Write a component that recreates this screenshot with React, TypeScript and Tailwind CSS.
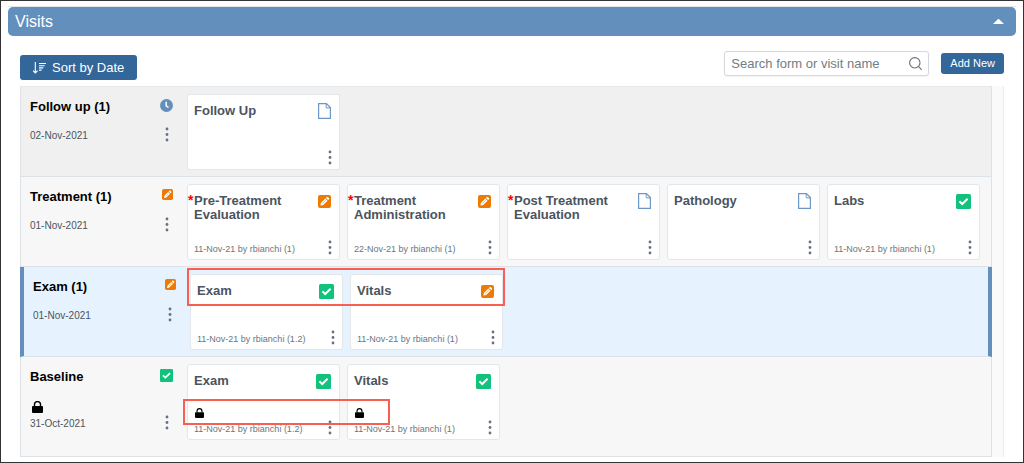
import { useState } from "react";
import clsx from "clsx";

type Status = "scheduled" | "inProgress" | "complete" | "empty";

interface Form {
  name: string;
  status: Status;
  info?: string;
  required?: boolean;
  locked?: boolean;
}

interface Visit {
  name: string;
  date: string;
  status: Status;
  forms: Form[];
  locked?: boolean;
  selected?: boolean;
}

const visits: Visit[] = [
  {
    name: "Follow up (1)",
    date: "02-Nov-2021",
    status: "scheduled",
    forms: [{ name: "Follow Up", status: "empty" }],
  },
  {
    name: "Treatment (1)",
    date: "01-Nov-2021",
    status: "inProgress",
    forms: [
      { name: "Pre-Treatment Evaluation", status: "inProgress", info: "11-Nov-21 by rbianchi (1)", required: true },
      { name: "Treatment Administration", status: "inProgress", info: "22-Nov-21 by rbianchi (1)", required: true },
      { name: "Post Treatment Evaluation", status: "empty", required: true },
      { name: "Pathology", status: "empty" },
      { name: "Labs", status: "complete", info: "11-Nov-21 by rbianchi (1)" },
    ],
  },
  {
    name: "Exam (1)",
    date: "01-Nov-2021",
    status: "inProgress",
    selected: true,
    forms: [
      { name: "Exam", status: "complete", info: "11-Nov-21 by rbianchi (1.2)" },
      { name: "Vitals", status: "inProgress", info: "11-Nov-21 by rbianchi (1)" },
    ],
  },
  {
    name: "Baseline",
    date: "31-Oct-2021",
    status: "complete",
    locked: true,
    forms: [
      { name: "Exam", status: "complete", info: "11-Nov-21 by rbianchi (1.2)", locked: true },
      { name: "Vitals", status: "complete", info: "11-Nov-21 by rbianchi (1)", locked: true },
    ],
  },
];

function StatusIcon({ status, small }: { status: Status; small?: boolean }) {
  if (status === "scheduled") {
    return (
      <svg className="size-[13px]" viewBox="0 0 13 13" fill="none">
        <circle cx="6.5" cy="6.5" r="6.5" fill="#638fbc" />
        <path d="M6.2 2.8v4l2.3 1.7" stroke="#fff" strokeWidth="1.5" />
      </svg>
    );
  }
  if (status === "inProgress") {
    return (
      <svg className={small ? "size-[11px]" : "size-[13px]"} viewBox="0 0 13 13">
        <rect width="13" height="13" rx="2" fill="#ee7a06" />
        <path d="M2.4 10.6l.5-2.7 4.4-4.4 2.2 2.2-4.4 4.4zM7.9 2.9l.7-.7c.4-.4.9-.4 1.3 0l.9.9c.4.4.4.9 0 1.3l-.7.7z" fill="#fff" />
        <path d="M4.3 8.7l3.4-3.4" stroke="#ee7a06" strokeWidth="0.5" />
      </svg>
    );
  }
  if (status === "complete") {
    return (
      <svg className={small ? "size-[13px]" : "size-[15px]"} viewBox="0 0 15 15" fill="none">
        <rect width="15" height="15" rx="1.5" fill="#10c27c" />
        <path d="M3.4 7.3l2.8 2.7 5.4-5.2" stroke="#fff" strokeWidth="2" />
      </svg>
    );
  }
  return (
    <svg className="h-4 w-[13px]" viewBox="0 0 13 16" fill="none" stroke="#6b98c6">
      <path d="M.6.6h7.8l4 4v10.8H.6z" strokeWidth="1.2" />
      <path d="M8.2.8v4.1h4.1" strokeWidth="1" />
    </svg>
  );
}

function LockIcon({ className }: { className: string }) {
  return (
    <svg className={className} viewBox="0 0 11 12" fill="none">
      <rect y="5" width="11" height="7" rx="1" fill="#000" />
      <path d="M2.5 5.5V3.6a3 3 0 0 1 6 0v1.9" stroke="#000" strokeWidth="1.4" />
    </svg>
  );
}

function MenuButton({ label }: { label: string }) {
  return (
    <button type="button" aria-label={label} className="shrink-0">
      <svg className="h-[15px] w-3" viewBox="0 0 12 15" fill="#66727f">
        <circle cx="6" cy="2" r="1.4" />
        <circle cx="6" cy="7.5" r="1.4" />
        <circle cx="6" cy="13" r="1.4" />
      </svg>
    </button>
  );
}

function FormCard({ form }: { form: Form }) {
  return (
    <article className="flex h-[76px] w-[153px] shrink-0 flex-col justify-between rounded-[3px] border border-[#e3e7eb] bg-white pt-2 pb-1">
      <div className="flex items-start pr-2">
        <span className="w-1.5 shrink-0 text-sm leading-[14px] font-bold text-[#ff0000]">{form.required && "*"}</span>
        <h3 className="flex-1 pt-px text-[13px] leading-[14px] font-bold text-[#4b545e]">{form.name}</h3>
        <div className="flex h-4 items-center">
          <StatusIcon status={form.status} />
        </div>
      </div>
      <div className="flex items-end justify-between pr-[3px] pl-1.5">
        <div className="text-[9px] leading-3 whitespace-nowrap text-[#6c757d]">
          {form.locked && <LockIcon className="mb-[5px] ml-px h-2.5 w-[9px]" />}
          <p>{form.info}</p>
        </div>
        <MenuButton label={`${form.name} menu`} />
      </div>
    </article>
  );
}

function VisitRow({ visit, first }: { visit: Visit; first: boolean }) {
  return (
    <section
      className={clsx(
        "flex border-b border-b-[#dde2e7] pt-[7px] pb-1.5",
        first ? "bg-[#f0f0f0]" : visit.selected ? "bg-[#e6f3fe]" : "bg-[#f7f7f7]",
        visit.selected ? "border-x-4 border-x-[#638fbc]" : "border-x border-x-[#dde2e7]",
        visit.locked && "min-h-[100px]"
      )}
    >
      <div className="flex w-[166px] shrink-0 justify-between self-start pt-[5px] pr-3.5 pl-[9px]">
        <div>
          <h2 className="text-[13px] leading-4 font-bold text-black">{visit.name}</h2>
          {visit.locked && <LockIcon className="mt-4 ml-0.5 h-3 w-[11px]" />}
          <p className={clsx("text-[10px] leading-3 text-[#4b545e]", visit.locked ? "mt-[5px]" : "mt-[15px]")}>
            {visit.date}
          </p>
        </div>
        <div className="flex flex-col items-end justify-between">
          <StatusIcon status={visit.status} small />
          <MenuButton label={`${visit.name} menu`} />
        </div>
      </div>

      <div className="relative flex items-start gap-[7px]">
        {visit.forms.map((form) => (
          <FormCard key={form.name} form={form} />
        ))}
        {/* callouts over the cards */}
        {visit.selected && (
          <div className="pointer-events-none absolute -top-1.5 -left-[3px] h-[38px] w-[318px] border-2 border-[#f95e52]" />
        )}
        {visit.locked && (
          <div className="pointer-events-none absolute top-[35px] -left-1 h-[26px] w-[207px] border-2 border-[#f95e52]" />
        )}
      </div>
    </section>
  );
}

export default function App() {
  const [isOpen, setIsOpen] = useState(true);
  const [search, setSearch] = useState("");

  const query = search.toLowerCase();
  const shown = visits.filter(
    (visit) =>
      visit.name.toLowerCase().includes(query) ||
      visit.forms.some((form) => form.name.toLowerCase().includes(query))
  );

  return (
    <main className="border border-[#333333] bg-white px-[7px] py-[5px] font-['Liberation_Sans',Arial,sans-serif]">
      <div className="border-t border-t-[#e3e7eb]">
        <header className="flex items-center justify-between rounded-[5px] bg-[#638fbc] py-0.5 pr-3 pl-[7px] text-white">
          <h1 className="text-base leading-[25px]">Visits</h1>
          <button type="button" aria-label="Toggle visits" onClick={() => setIsOpen(!isOpen)}>
            <svg className={clsx("h-[5px] w-[11px]", !isOpen && "rotate-180")} viewBox="0 0 11 5" fill="#fff">
              <path d="M0 5L4.6.4a1.2 1.2 0 0 1 1.8 0L11 5z" />
            </svg>
          </button>
        </header>
      </div>

      {isOpen && (
        <div className="px-3 pt-[15px]">
          {/* toolbar */}
          <div className="flex items-start justify-between pb-1.5">
            <button
              type="button"
              className="mt-1 flex h-[25px] items-center gap-1.5 rounded-[3px] bg-[#336699] px-[13px] text-[13px] text-white"
            >
              <svg className="h-3 w-[13px]" viewBox="0 0 13 12" fill="none" stroke="#fff">
                <path d="M2.3 0v11M0 8.6l2.3 2.4 2.3-2.4" strokeWidth="1.1" />
                <path d="M6 1.5h7M6 3.7h5.7M6 5.9h4.3M6 8.1h2.6" strokeWidth="1.1" />
              </svg>
              Sort by Date
            </button>
            <div className="flex items-center gap-3">
              <label className="flex h-[25px] w-[205px] items-center rounded-[3px] border border-[#d3d8dd] bg-white px-1.5 shadow-xs">
                <input
                  type="text"
                  aria-label="Search form or visit name"
                  placeholder="Search form or visit name"
                  value={search}
                  onChange={(e) => setSearch(e.target.value)}
                  className="min-w-0 flex-1 text-[13px] text-[#4b545e] outline-none placeholder:text-[#747c84]"
                />
                <svg className="size-[13px]" viewBox="0 0 13 13" fill="none" stroke="#66727f" strokeWidth="1.1">
                  <circle cx="5.8" cy="5.8" r="5.2" />
                  <path d="M9.6 9.6l3.1 3.1" />
                </svg>
              </label>
              <button type="button" className="h-[21px] rounded-[3px] bg-[#336699] px-[9px] text-[11px] text-white">
                Add New
              </button>
            </div>
          </div>

          {/* visit list, with the empty scroll track on its right */}
          <div className="border-r border-r-[#ececec] bg-[#fafafa] pr-[11px]">
            <div className="border-t border-t-[#e6e9ec]">
              {shown.map((visit, i) => (
                <VisitRow key={visit.name} visit={visit} first={i === 0} />
              ))}
            </div>
          </div>
        </div>
      )}
    </main>
  );
}
